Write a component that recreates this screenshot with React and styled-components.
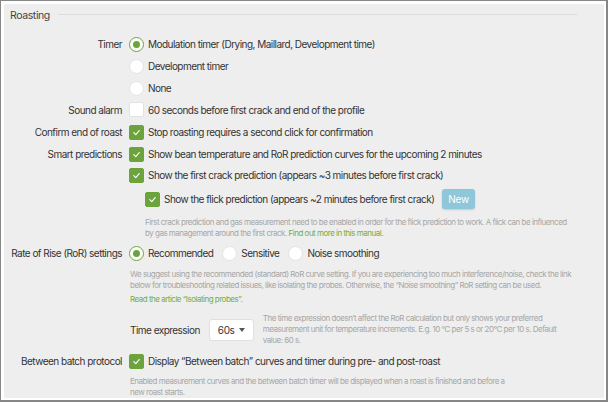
import React from "react";
import styled, { createGlobalStyle } from "styled-components";

const GlobalStyle = createGlobalStyle`
  html, body {
    margin: 0;
    padding: 0;
    background: #ffffff;
  }
  body {
    font-family: Inter, "Noto Sans", sans-serif;
    color: #333;
  }
`;

const theme = {
  green: "#6ba33d",
  link: "#74ad3f",
  help: "#a6a6a6",
  text: "#333333",
  panel: "#eeeeee",
};

const Frame = styled.div`
  width: 608px;
  height: 402px;
  box-sizing: border-box;
  border: 1px solid #878787;
  border-right-width: 2px;
  border-bottom-width: 2px;
  padding: 3px 2px 2px 3px;
  background: #fff;
  overflow: hidden;
`;

const Panel = styled.div`
  height: 100%;
  background: ${theme.panel};
  padding: 0 27px 0 0;
  box-sizing: border-box;
`;

const Legend = styled.div`
  display: flex;
  align-items: center;
  height: 22px;
  padding-left: 6px;
  font-size: 10.5px;
  letter-spacing: -0.4px;
  color: #444;

  &::after {
    content: "";
    flex: 1;
    height: 1px;
    margin-left: 8px;
    margin-top: -1px;
    background: #dcdcdc;
  }
`;

const Row = styled.div`
  display: grid;
  grid-template-columns: 118px 1fr;
  column-gap: 7px;
  margin-top: ${(p) => p.$mt || 0}px;
`;

const Label = styled.div`
  text-align: right;
  font-size: 10px;
  letter-spacing: -0.53px;
  line-height: 22px;
  color: ${theme.text};
  white-space: nowrap;
`;

const Controls = styled.div`
  display: flex;
  flex-direction: column;
`;

const Option = styled.label`
  display: flex;
  align-items: center;
  height: ${(p) => p.$h || 22}px;
  padding-left: ${(p) => p.$indent || 0}px;
  font-size: 10px;
  letter-spacing: -0.53px;
  color: ${theme.text};
  white-space: nowrap;
`;

const Inline = styled.div`
  display: flex;
  align-items: center;
  height: 22px;
  gap: 9px;
`;

const RadioDot = styled.span`
  box-sizing: border-box;
  width: 15px;
  height: 15px;
  flex: none;
  border-radius: 50%;
  background: #fff;
  border: 1px solid ${(p) => (p.$on ? theme.green : "#e2e2e2")};
  margin-right: 4px;
  display: flex;
  align-items: center;
  justify-content: center;

  &::after {
    content: "";
    display: ${(p) => (p.$on ? "block" : "none")};
    width: 7px;
    height: 7px;
    border-radius: 50%;
    background: ${theme.green};
  }
`;

const Box = styled.span`
  box-sizing: border-box;
  width: 15px;
  height: 15px;
  flex: none;
  border-radius: 2px;
  margin-right: 4px;
  background: ${(p) => (p.$on ? theme.green : "#fff")};
  border: 1px solid ${(p) => (p.$on ? theme.green : "#e2e2e2")};
  display: flex;
  align-items: center;
  justify-content: center;
`;

const Badge = styled.span`
  margin-left: 8px;
  height: 20px;
  padding: 0 6px;
  display: inline-flex;
  align-items: center;
  border-radius: 3px;
  background: #8ec6da;
  color: #fff;
  font-size: 10px;
  letter-spacing: -0.3px;
  box-shadow: 0 1px 2px rgba(0, 0, 0, 0.15);
`;

const Help = styled.p`
  margin: ${(p) => p.$mt || 0}px 0 0 ${(p) => p.$indent || 0}px;
  font-size: 8px;
  letter-spacing: -0.5px;
  line-height: 11px;
  color: ${theme.help};
  white-space: nowrap;
`;

const Link = styled.span`
  color: ${theme.link};
`;

const TimeRow = styled.div`
  display: flex;
  align-items: center;
  gap: 9px;
  margin-top: 8px;
  margin-left: 1px;
`;

const TimeLabel = styled.span`
  font-size: 10px;
  letter-spacing: -0.53px;
  color: ${theme.text};
  white-space: nowrap;
`;

const Select = styled.div`
  box-sizing: border-box;
  width: 45px;
  height: 22px;
  flex: none;
  background: #fff;
  border: 1px solid #e0e0e0;
  border-radius: 3px;
  display: flex;
  align-items: center;
  justify-content: space-between;
  padding: 0 8px 0 8px;
  font-size: 10px;
  letter-spacing: -0.4px;
  color: ${theme.text};

  &::after {
    content: "";
    border-left: 3.5px solid transparent;
    border-right: 3.5px solid transparent;
    border-top: 4px solid #555;
  }
`;

const SideHelp = styled(Help)`
  margin: 0;
`;

function Check() {
  return (
    <svg width="9" height="9" viewBox="0 0 10 10">
      <polyline
        points="2,5.2 4.2,7.3 8,2.8"
        fill="none"
        stroke="#fff"
        strokeWidth="1.3"
        strokeLinecap="round"
        strokeLinejoin="round"
      />
    </svg>
  );
}

function Radio({ on, children, h }) {
  return (
    <Option $h={h}>
      <RadioDot $on={on} />
      {children}
    </Option>
  );
}

function Checkbox({ on, children, indent, h }) {
  return (
    <Option $indent={indent} $h={h}>
      <Box $on={on}>{on && <Check />}</Box>
      {children}
    </Option>
  );
}

export default function App() {
  return (
    <>
      <GlobalStyle />
      <Frame>
        <Panel>
          <Legend>Roasting</Legend>

          <Row $mt={7}>
            <Label>Timer</Label>
            <Controls>
              <Radio on>Modulation timer (Drying, Maillard, Development time)</Radio>
              <Radio>Development timer</Radio>
              <Radio>None</Radio>
            </Controls>
          </Row>

          <Row>
            <Label>Sound alarm</Label>
            <Controls>
              <Checkbox h={21}>60 seconds before first crack and end of the profile</Checkbox>
            </Controls>
          </Row>

          <Row>
            <Label>Confirm end of roast</Label>
            <Controls>
              <Checkbox on>Stop roasting requires a second click for confirmation</Checkbox>
            </Controls>
          </Row>

          <Row>
            <Label>Smart predictions</Label>
            <Controls>
              <Checkbox on>
                Show bean temperature and RoR prediction curves for the upcoming 2 minutes
              </Checkbox>
              <Checkbox on h={20}>
                Show the first crack prediction (appears ~3 minutes before first crack)
              </Checkbox>
              <Checkbox on indent={16} h={28}>
                Show the flick prediction (appears ~2 minutes before first crack)
                <Badge>New</Badge>
              </Checkbox>
              <Help $indent={16} $mt={4}>
                First crack prediction and gas measurement need to be enabled in order for the flick
                prediction to work. A flick can be influenced
                <br />
                by gas management around the first crack.{" "}
                <Link>Find out more in this manual.</Link>
              </Help>
            </Controls>
          </Row>

          <Row $mt={3}>
            <Label>Rate of Rise (RoR) settings</Label>
            <Controls>
              <Inline>
                <Radio on>Recommended</Radio>
                <Radio>Sensitive</Radio>
                <Radio>Noise smoothing</Radio>
              </Inline>
              <Help $mt={5} $indent={1}>
                We suggest using the recommended (standard) RoR curve setting. If you are experiencing
                too much interference/noise, check the link
                <br />
                below for troubleshooting related issues, like isolating the probes. Otherwise, the
                “Noise smoothing” RoR setting can be used.
              </Help>
              <Help $mt={3} $indent={1}>
                <Link>Read the article “Isolating probes”.</Link>
              </Help>
              <TimeRow>
                <TimeLabel>Time expression</TimeLabel>
                <Select>60s</Select>
                <SideHelp>
                  The time expression doesn’t affect the RoR calculation but only shows your preferred
                  <br />
                  measurement unit for temperature increments. E.g. 10 °C per 5 s or 20°C per 10 s.
                  Default
                  <br />
                  value: 60 s.
                </SideHelp>
              </TimeRow>
            </Controls>
          </Row>

          <Row $mt={4}>
            <Label>Between batch protocol</Label>
            <Controls>
              <Checkbox on>
                Display “Between batch” curves and timer during pre- and post-roast
              </Checkbox>
              <Help $mt={4} $indent={1}>
                Enabled measurement curves and the between batch timer will be displayed when a roast
                is finished and before a
                <br />
                new roast starts.
              </Help>
            </Controls>
          </Row>
        </Panel>
      </Frame>
    </>
  );
}
